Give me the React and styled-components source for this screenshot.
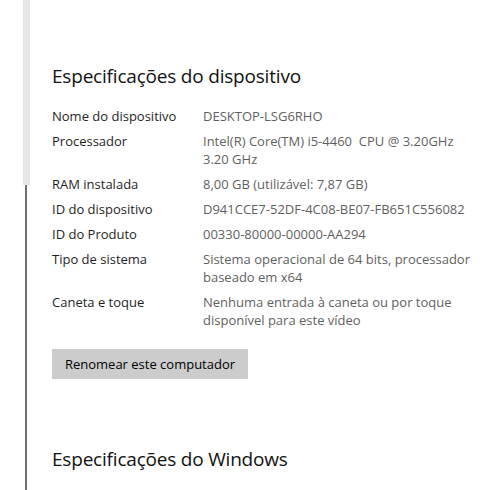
import styled, { createGlobalStyle } from 'styled-components';

const specs = [
  { label: 'Nome do dispositivo', value: ['DESKTOP-LSG6RHO'] },
  { label: 'Processador', value: ['Intel(R) Core(TM) i5-4460  CPU @ 3.20GHz', '3.20 GHz'] },
  { label: 'RAM instalada', value: ['8,00 GB (utilizável: 7,87 GB)'] },
  { label: 'ID do dispositivo', value: ['D941CCE7-52DF-4C08-BE07-FB651C556082'] },
  { label: 'ID do Produto', value: ['00330-80000-00000-AA294'] },
  { label: 'Tipo de sistema', value: ['Sistema operacional de 64 bits, processador', 'baseado em x64'] },
  { label: 'Caneta e toque', value: ['Nenhuma entrada à caneta ou por toque', 'disponível para este vídeo'] },
];

export default function App() {
  return (
    <>
      <GlobalStyle />
      <Page>
        <Rail>
          <RailTrack />
          <RailThumb />
        </Rail>
        <Content>
          <Heading>Especificações do dispositivo</Heading>
          <SpecList>
            {specs.map((s) => (
              <SpecRow key={s.label}>
                <Label>{s.label}</Label>
                <Value>
                  {s.value.map((line) => (
                    <div key={line}>{line}</div>
                  ))}
                </Value>
              </SpecRow>
            ))}
          </SpecList>
          <RenameButton>Renomear este computador</RenameButton>
          <Heading $second>Especificações do Windows</Heading>
        </Content>
      </Page>
    </>
  );
}

const GlobalStyle = createGlobalStyle`
  body {
    margin: 0;
    background: #fff;
    font-family: "Open Sans", "Noto Sans", sans-serif;
  }
`;

const Page = styled.div`
  display: flex;
  height: 100vh;
  overflow: hidden;
`;

const Rail = styled.div`
  display: flex;
  flex-direction: column;
  width: 7px;
  margin-left: 23px;
  flex-shrink: 0;
`;

const RailTrack = styled.div`
  height: 185px;
  background: #e6e6e6;
`;

const RailThumb = styled.div`
  flex: 1;
  width: 2px;
  margin-left: 2px;
  background: #6e6e6e;
`;

const Content = styled.div`
  padding-left: 22px;
  padding-top: 62px;
`;

const Heading = styled.h2`
  margin: ${(p) => (p.$second ? '66px 0 0' : '0')};
  font-size: 19px;
  letter-spacing: -0.2px;
  font-weight: 400;
  color: #111;
  line-height: 28px;
`;

const SpecList = styled.div`
  display: flex;
  flex-direction: column;
  gap: 7px;
  margin-top: 17px;
`;

const SpecRow = styled.div`
  display: grid;
  grid-template-columns: 151px 1fr;
  font-size: 13px;
  line-height: 18px;
`;

const Label = styled.div`
  color: #1f1f1f;
`;

const Value = styled.div`
  color: #5f5f5f;
  white-space: pre-wrap;
`;

const RenameButton = styled.button`
  margin-top: 20px;
  width: 196px;
  height: 30px;
  border: none;
  background: #cccccc;
  font-family: inherit;
  font-size: 13px;
  color: #000;
  padding: 0;
`;
